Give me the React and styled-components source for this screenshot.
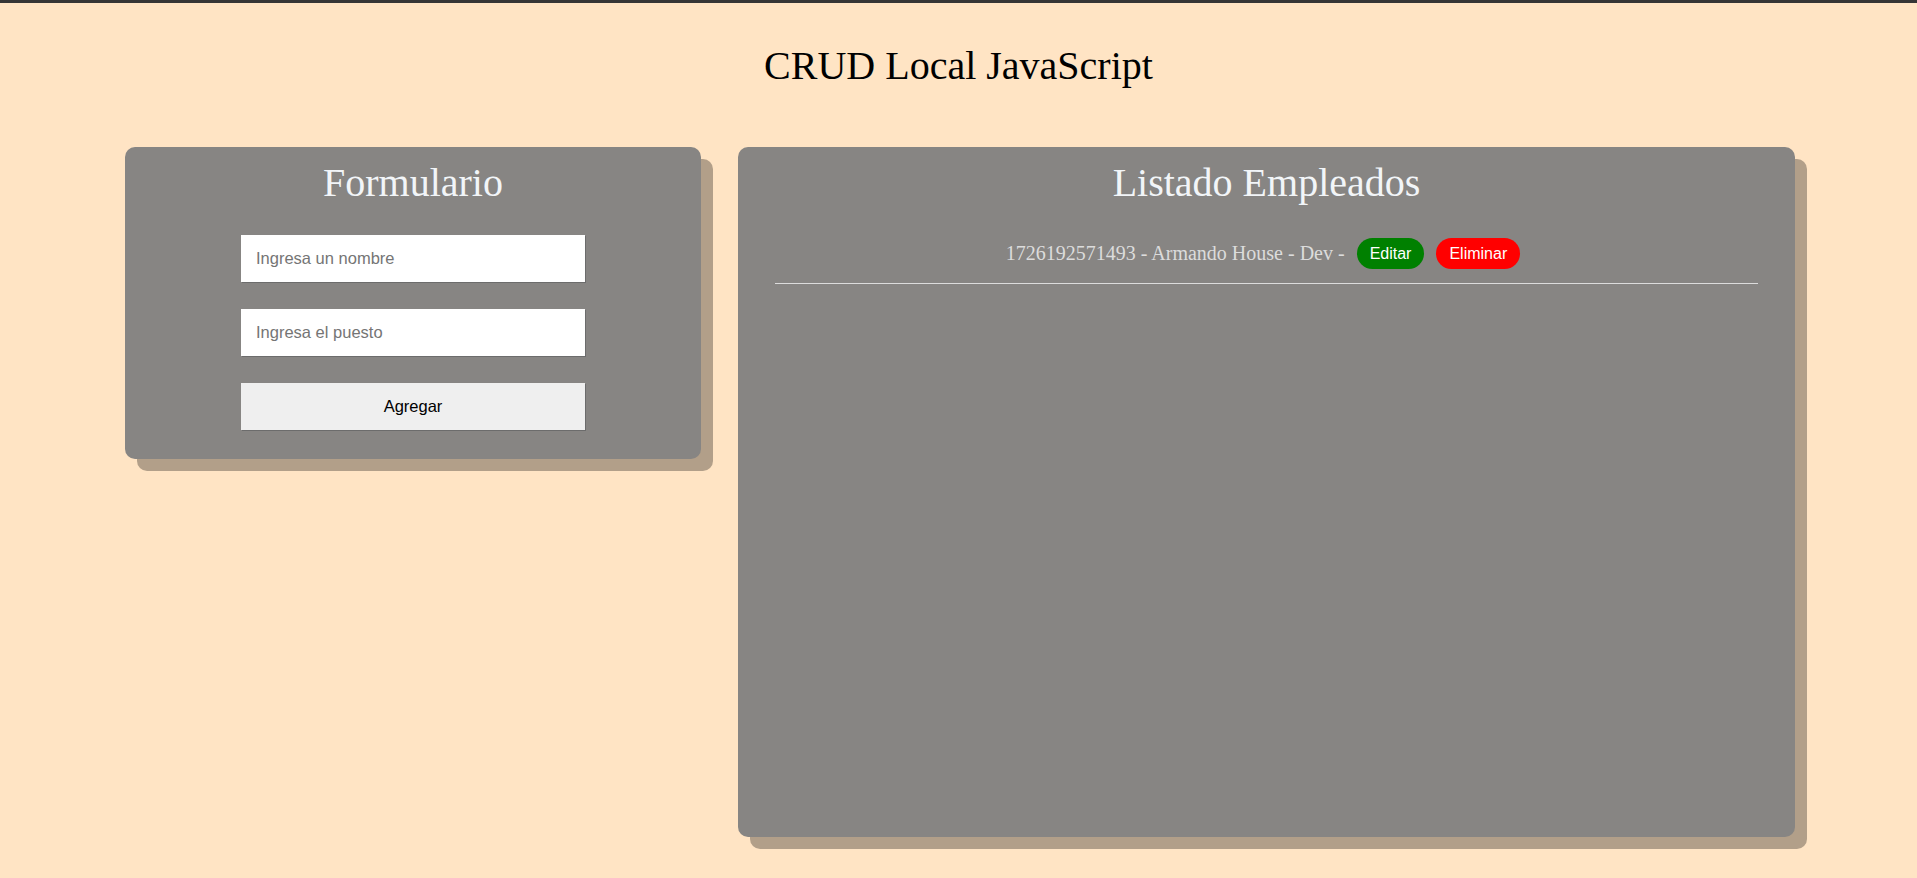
import React, { useState } from 'react';
import styled, { createGlobalStyle } from 'styled-components';

const GlobalStyle = createGlobalStyle`
  html, body {
    margin: 0;
    padding: 0;
    background: #ffe4c4;
  }
  body {
    font-family: "Liberation Serif", "Times New Roman", serif;
  }
`;

const Page = styled.div`
  min-height: 875px;
  border-top: 3px solid #353535;
  background: #ffe4c4;
`;

const Title = styled.h1`
  margin: 40px 0 0;
  font-size: 40px;
  line-height: 46px;
  font-weight: normal;
  text-align: center;
  color: #000;
`;

const Layout = styled.main`
  width: 1670px;
  margin: 58px 0 0 125px;
  display: grid;
  grid-template-columns: 576px 1fr;
  gap: 37px;
  align-items: start;
`;

const Panel = styled.section`
  background: #878583;
  border-radius: 10px;
  box-shadow: 12px 12px 0 rgba(0, 0, 0, 0.3);
  padding: 13px 37px 29px;
  height: ${p => (p.tall ? '690px' : 'auto')};
  box-sizing: border-box;
`;

const PanelTitle = styled.h2`
  margin: 0;
  font-size: 40px;
  line-height: 46px;
  font-weight: normal;
  text-align: center;
  color: #f2f5f8;
`;

const Form = styled.form`
  width: 344px;
  margin: 29px auto 0 79px;
  display: flex;
  flex-direction: column;
  gap: 27px;
`;

const Field = styled.input`
  box-sizing: border-box;
  width: 100%;
  height: 47px;
  padding: 0 15px;
  border: none;
  box-shadow: 1px 1px 0 #6c6c6c;
  background: #fff;
  font-family: "Liberation Sans", Arial, sans-serif;
  font-size: 16.5px;
  color: #000;
  outline: none;

  &::placeholder {
    color: #757575;
  }
`;

const Submit = styled.button`
  box-sizing: border-box;
  width: 100%;
  height: 47px;
  border: none;
  box-shadow: 1px 1px 0 #6c6c6c;
  background: #efefef;
  font-family: "Liberation Sans", Arial, sans-serif;
  font-size: 16.5px;
  color: #000;
  cursor: pointer;
`;

const Row = styled.div`
  margin-top: 32px;
  padding: 0 7px 14px 0;
  border-bottom: 1px solid #dcdcdc;
  display: flex;
  justify-content: center;
  align-items: center;
  gap: 12px;
`;

const RowText = styled.span`
  font-size: 20px;
  line-height: 23px;
  color: #dcdcdc;
`;

const Pill = styled.button`
  height: 31px;
  padding: 0 13px;
  border: none;
  border-radius: 16px;
  background: ${p => p.bg};
  color: #fff;
  font-family: "Liberation Sans", Arial, sans-serif;
  font-size: 16px;
  cursor: pointer;
`;

const App = () => {
  const [empleados] = useState([
    { id: 1726192571493, nombre: 'Armando House', puesto: 'Dev' }
  ]);

  return (
    <Page>
      <GlobalStyle />
      <Title>CRUD Local JavaScript</Title>
      <Layout>
        <Panel>
          <PanelTitle>Formulario</PanelTitle>
          <Form onSubmit={e => e.preventDefault()}>
            <Field placeholder="Ingresa un nombre" />
            <Field placeholder="Ingresa el puesto" />
            <Submit type="submit">Agregar</Submit>
          </Form>
        </Panel>
        <Panel tall>
          <PanelTitle>Listado Empleados</PanelTitle>
          {empleados.map(emp => (
            <Row key={emp.id}>
              <RowText>{emp.id} - {emp.nombre} - {emp.puesto} -</RowText>
              <Pill bg="#008000">Editar</Pill>
              <Pill bg="#ff0000">Eliminar</Pill>
            </Row>
          ))}
        </Panel>
      </Layout>
    </Page>
  );
};

export default App;
